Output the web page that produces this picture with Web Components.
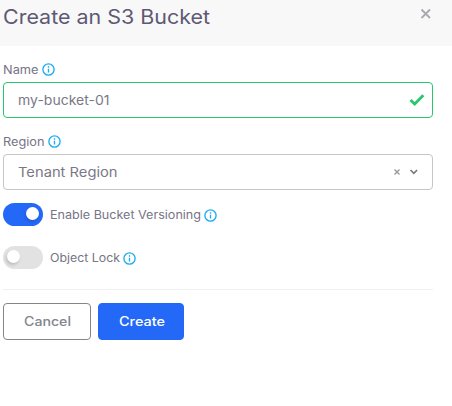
<!DOCTYPE html>
<html lang="en"><head><meta charset="utf-8"><title>Create an S3 Bucket</title>
<style>html,body{margin:0;height:100%;background:#fff;overflow:hidden}body{font-family:Inter,sans-serif;color:#777485}</style></head>
<body><bucket-dialog></bucket-dialog>
<script>
const define = (name, html, setup) => customElements.define(name, class extends HTMLElement {
  connectedCallback() {
    if (this.shadowRoot) return;
    this.attachShadow({mode: 'open'}).innerHTML = html;
    if (setup) setup(this, this.shadowRoot);
  }
});

define('wide-text', `<style>
:host{display:block;white-space:nowrap;flex:none}
span{display:inline-block;transform-origin:0 50%}
</style><span><slot></slot></span>`, (el, root) => {
  const width = +el.getAttribute('width'), span = root.querySelector('span');
  el.style.width = width + 'px';
  span.style.transform = `scaleX(${width / span.getBoundingClientRect().width})`;
});

define('info-icon', `<style>:host{display:block;width:13px;height:13px;flex:none}svg{display:block}</style>
<svg width="13" height="13" viewBox="0 0 13 13" fill="none" stroke="#1badf0"><circle cx="6.5" cy="6.5" r="5.6" stroke-width="1.35"/><path d="M6.5 5.8v3.8M6.5 3.3v1.4" stroke-width="1.35"/></svg>`);

define('field-label', `<style>:host{display:flex;align-items:center;gap:3px;height:14px;font-size:11.3px;line-height:14px}
info-icon{margin-top:-1px}
</style><slot></slot><info-icon></info-icon>`);

define('field-box', `<style>
:host{display:flex;align-items:center;box-sizing:border-box;height:36px;border:1px solid #c6c6c8;border-radius:4px;padding:0 13px;font-size:13.2px;line-height:18px;background:#fff;color:#7b7886}
:host([valid]){border-color:#28c76f}
div{margin-left:auto;display:flex;align-items:center}
</style><slot></slot><div><slot name="end"></slot></div>`);

define('toggle-row', `<style>
:host{display:flex;height:23px;align-items:center;font-size:11.3px;line-height:14px}
i{display:block;box-sizing:border-box;width:40px;height:23px;border-radius:12px;background:#e2e2e2;padding:4px;margin-right:6.5px;flex:none}
i::before{content:"";display:block;width:13px;height:13px;border-radius:50%;background:#fff;box-shadow:-1px 2px 3px rgba(34,41,47,.2)}
:host([on]) i{background:#2468f8;padding-left:23px}
info-icon{margin:2px 0 0 3px}
</style><i></i><slot></slot><info-icon></info-icon>`);

define('action-button', `<style>
:host{display:block}
button{display:flex;align-items:center;justify-content:center;box-sizing:border-box;height:37px;width:88px;margin:0;padding:0 3px 0 0;border:1px solid #82868b;border-radius:4px;background:#fff;color:#82868b;font:450 12.8px/18px Inter,sans-serif}
:host([primary]) button{width:86px;background:#2468f8;border-color:#2468f8;color:#fff;font-weight:500}
</style><button type="button"><slot></slot></button>`);

define('bucket-dialog', `<style>
:host{display:block}
header{height:46px;box-sizing:border-box;background:#f8f8f8;display:flex;padding:4px 20px 0 3px;justify-content:space-between;color:#5e5873;font-size:19.5px;line-height:26px}
header svg{margin-top:4px}
main{display:flex;flex-direction:column;padding:17px 19px 0 3px}
field-box{margin-top:5px}
.region{margin-top:17px}.on{margin-top:13px}.off{margin-top:20px}
footer{display:flex;gap:7px;border-top:1px solid #f1f1f2;margin-top:20px;padding-top:13px}
svg{display:block}
</style>
<header><wide-text width="207">Create an S3 Bucket</wide-text>
<svg width="12" height="12" viewBox="0 0 12 12" stroke="#aaa8b3" stroke-width="1.8"><path d="M1.5 1.5l8.5 8.5M10 1.5L1.5 10"/></svg></header>
<main>
<field-label><wide-text width="35.5">Name</wide-text></field-label>
<field-box valid><wide-text width="91.5" style="margin-left:.7px">my-bucket-01</wide-text>
<svg slot="end" style="margin-right:-6px" width="16" height="14" viewBox="0 0 16 14" fill="none" stroke="#28c76f" stroke-width="2.8"><path d="M1.5 7l4.2 4.1L14.3 2.3"/></svg></field-box>
<field-label class="region"><wide-text width="41.5">Region</wide-text></field-label>
<field-box><wide-text width="99.5" style="margin-left:1.3px">Tenant Region</wide-text>
<svg slot="end" width="27" height="12" viewBox="0 0 27 12" fill="none"><path d="M2.5 3.5l5 5M7.5 3.5l-5 5" stroke="#999" stroke-width="1.4"/><path d="M18.5 4l3.3 3.3L25.1 4" stroke="#777" stroke-width="1.6"/></svg></field-box>
<toggle-row on class="on"><wide-text width="151">Enable Bucket Versioning</wide-text></toggle-row>
<toggle-row class="off"><wide-text width="70">Object Lock</wide-text></toggle-row>
<footer><action-button><wide-text width="47">Cancel</wide-text></action-button><action-button primary><wide-text width="46">Create</wide-text></action-button></footer>
</main>`);
</script></body></html>
